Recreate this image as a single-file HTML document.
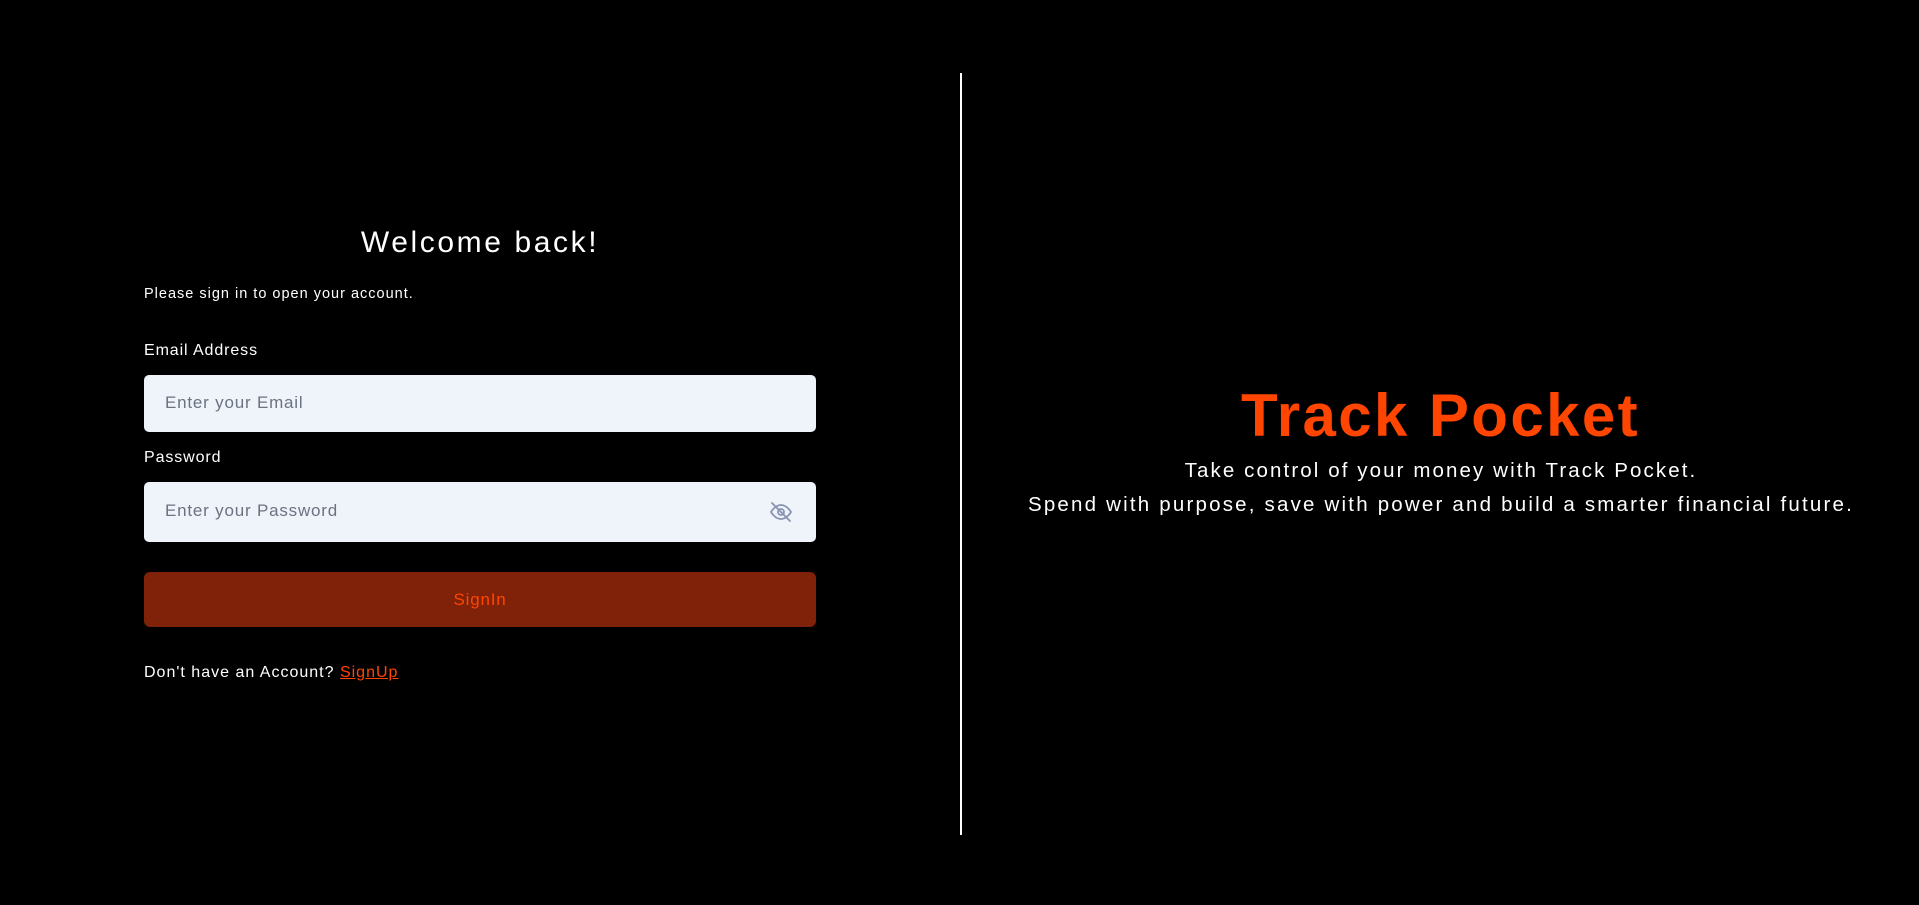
<!DOCTYPE html>
<html><head><meta charset="utf-8"><style>
*{margin:0;padding:0;box-sizing:border-box}
body{width:1919px;height:905px;background:#000;position:relative;overflow:hidden;font-family:"Liberation Sans",sans-serif;color:#fff}
.a{position:absolute;white-space:nowrap}
.inp{position:absolute;left:144px;width:672px;background:#eff3fa;border-radius:5px}
.ph{position:absolute;left:21px;color:#6b7280;font-size:17px;letter-spacing:0.8px}
</style></head><body>
<div class="a" style="left:144px;width:672px;top:226px;text-align:center;font-size:30px;letter-spacing:2.6px">Welcome back!</div>
<div class="a" style="left:144px;top:286px;font-size:14.5px;letter-spacing:1px">Please sign in to open your account.</div>
<div class="a" style="left:144px;top:342px;font-size:16px;letter-spacing:0.9px">Email Address</div>
<div class="inp" style="top:375px;height:57px"><span class="ph" style="top:18px">Enter your Email</span></div>
<div class="a" style="left:144px;top:449px;font-size:16px;letter-spacing:0.9px">Password</div>
<div class="inp" style="top:482px;height:60px"><span class="ph" style="top:19px">Enter your Password</span>
<svg style="position:absolute;left:624px;top:18px" width="26" height="24" viewBox="0 0 24 24" fill="none" stroke="#8a93b3" stroke-width="1.8" stroke-linecap="round"><path d="M2 12s4-7 10-7 10 7 10 7-4 7-10 7S2 12 2 12z"/><circle cx="12" cy="12" r="3"/><path d="M3 3l18 18"/></svg></div>
<div class="a" style="left:144px;top:572px;width:672px;height:55px;background:#80220a;border-radius:6px;color:#ff4500;font-size:17px;text-align:center;line-height:55px;letter-spacing:0.8px">SignIn</div>
<div class="a" style="left:144px;top:664px;font-size:16px;letter-spacing:1px">Don't have an Account? <span style="color:#ff4500;text-decoration:underline">SignUp</span></div>
<div class="a" style="left:960px;top:73px;width:2px;height:762px;background:#fff"></div>
<div class="a" style="left:962px;width:957px;top:381px;text-align:center;font-size:60px;font-weight:bold;color:#ff4500;letter-spacing:2.4px">Track Pocket</div>
<div class="a" style="left:962px;width:958px;top:459px;text-align:center;font-size:20.5px;letter-spacing:2.1px">Take control of your money with Track Pocket.</div>
<div class="a" style="left:962px;width:958px;top:493px;text-align:center;font-size:20.5px;letter-spacing:2.2px">Spend with purpose, save with power and build a smarter financial future.</div>
</body></html>
